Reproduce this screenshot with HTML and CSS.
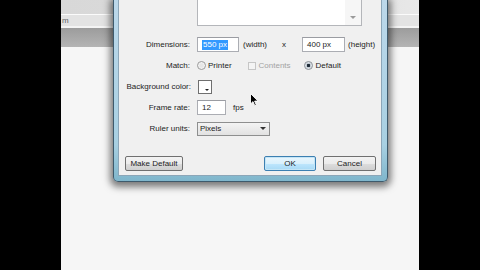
FILE: index.html
```html
<!DOCTYPE html>
<html>
<head>
<meta charset="utf-8">
<title>Document Properties</title>
<link rel="stylesheet" href="styles.css">
</head>
<body>
<div class="screen">
  <div class="black"></div>
  <div class="desk">
    <div class="bg-top"></div>
    <div class="bg-line"></div>
    <div class="bg-menu"><span class="menu-text">m</span></div>
    <div class="bg-line2"></div>
    <div class="bg-band"></div>
    <div class="bg-rest"></div>

    <div class="dialog">
      <div class="client">
        <div class="desc">
          <div class="desc-scroll"><span class="tri-down"></span></div>
        </div>
        <div class="rows">
          <div class="row">
            <div class="label">Dimensions:</div>
            <div class="input in-w"><span class="sel">550 px</span></div>
            <span class="txt ml4">(width)</span>
            <span class="txt ml15">x</span>
            <div class="input in-h ml16"><span class="val">400 px</span></div>
            <span class="txt ml3">(height)</span>
          </div>
          <div class="row">
            <div class="label">Match:</div>
            <span class="radio"></span>
            <span class="txt ml2">Printer</span>
            <span class="check ml16"></span>
            <span class="txt ml3 disabled">Contents</span>
            <span class="radio on ml13"></span>
            <span class="txt ml3">Default</span>
          </div>
          <div class="row">
            <div class="label lbl-wide">Background color:</div>
            <div class="swatch"><span class="sw-tri"></span></div>
          </div>
          <div class="row">
            <div class="label">Frame rate:</div>
            <div class="input in-fr"><span class="val">12</span></div>
            <span class="txt ml7">fps</span>
          </div>
          <div class="row">
            <div class="label">Ruler units:</div>
            <div class="select"><span class="val">Pixels</span><span class="tri-down dark"></span></div>
          </div>
        </div>
        <div class="buttons">
          <div class="btn btn-md">Make Default</div>
          <div class="spacer"></div>
          <div class="btn btn-ok">OK</div>
          <div class="btn btn-cancel">Cancel</div>
        </div>
      </div>
    </div>

    <svg class="cursor" width="9" height="14" viewBox="0 0 9 14">
      <path d="M0.5 0.5 L0.5 11 L3 8.6 L4.8 12.8 L6.3 12.1 L4.6 8.1 L8 8.1 Z" fill="#000" stroke="#fff" stroke-width="0.9"/>
    </svg>
  </div>
  <div class="black"></div>
</div>
</body>
</html>
```

FILE: styles.css
```css
html, body {
  margin: 0;
  padding: 0;
  background: #000;
}

.screen {
  display: flex;
  width: 480px;
  height: 270px;
  background: #000;
  font-family: "Liberation Sans", Arial, sans-serif;
  font-size: 8px;
  color: #1c1c1c;
}

.black {
  width: 61px;
  flex: none;
  background: #000;
}

.desk {
  position: relative;
  width: 358px;
  height: 270px;
  flex: none;
  overflow: hidden;
  display: flex;
  flex-direction: column;
  background: #f5f5f5;
}

.bg-top {
  height: 14px;
  background: linear-gradient(90deg, #d8d8d8, #dcdcdc 60%, #e8e8e8);
}

.bg-line {
  height: 1px;
  background: #fbfbfb;
}

.bg-menu {
  height: 11px;
  background: #e3e3e3;
  display: flex;
  align-items: center;
}

.menu-text {
  padding-left: 1px;
  color: #666;
  line-height: 11px;
}

.bg-line2 {
  height: 2px;
  background: #f4f4f4;
}

.bg-band {
  height: 19px;
  background: linear-gradient(#9c9c9c, #b4b4b4);
}

.bg-rest {
  flex: 1;
  background: #f6f6f6;
}

/* dialog window */
.dialog {
  position: absolute;
  left: 52px;
  top: 0;
  width: 275px;
  height: 182px;
  box-sizing: border-box;
  border: 1px solid #3e5a6c;
  border-top: 0;
  border-radius: 0 0 5px 5px;
  padding: 0 5px 5px 4px;
  background: linear-gradient(#bcd8ea, #a8d0e2 80%, #7fb6cc);
  box-shadow: 0 2px 7px 3px rgba(0, 0, 0, 0.5);
}

.client {
  height: 176px;
  box-sizing: border-box;
  background: #f0f0f0;
  border-left: 1px solid #8ca6b8;
  border-right: 1px solid #8ca6b8;
  border-bottom: 1px solid #8ca6b8;
  display: flex;
  flex-direction: column;
}

.desc {
  margin-left: 78px;
  width: 165px;
  height: 26px;
  box-sizing: border-box;
  background: #fff;
  border: 1px solid #b4b6ba;
  border-top: 0;
  display: flex;
  justify-content: flex-end;
}

.desc-scroll {
  width: 16px;
  background: #f6f6f6;
  display: flex;
  align-items: flex-end;
  justify-content: center;
  padding-bottom: 6px;
  box-sizing: border-box;
}

.tri-down {
  width: 0;
  height: 0;
  border-left: 3px solid transparent;
  border-right: 3px solid transparent;
  border-top: 3px solid #9a9a9a;
}

.tri-down.dark {
  border-top-color: #333;
}

.rows {
  margin-top: 11px;
  display: flex;
  flex-direction: column;
  gap: 6px;
}

.row {
  height: 15px;
  display: flex;
  align-items: center;
}

.label {
  width: 71px;
  flex: none;
  text-align: right;
  white-space: nowrap;
  margin-right: 7px;
}

.lbl-wide {
  width: 72px;
  margin-right: 7px;
}

.txt {
  white-space: nowrap;
}

.disabled {
  color: #a3a3a3;
}

.ml2 { margin-left: 2px; }
.ml3 { margin-left: 3px; }
.ml4 { margin-left: 4px; }
.ml7 { margin-left: 7px; }
.ml13 { margin-left: 13px; }
.ml15 { margin-left: 15px; }
.ml16 { margin-left: 16px; }

.input {
  height: 15px;
  box-sizing: border-box;
  background: #fff;
  border: 1px solid #abadb3;
  border-top-color: #9a9ca2;
  display: flex;
  align-items: center;
}

.in-w { width: 42px; padding-left: 4px; }
.in-h { width: 43px; padding-left: 4px; }
.in-fr { width: 29px; padding-left: 4px; }

.sel {
  background: #3399ff;
  color: #fff;
  line-height: 10px;
  padding: 0 1px;
}

.radio {
  width: 9px;
  height: 9px;
  flex: none;
  box-sizing: border-box;
  border-radius: 50%;
  border: 1px solid #9a9a9a;
  background: radial-gradient(circle, #e6e6e6 30%, #f8f8f8 80%);
}

.radio.on {
  border-color: #8a8f96;
  background: radial-gradient(circle, #1e2a36 0 28%, #b9c3cc 35%, #f4f6f8 80%);
}

.check {
  width: 8px;
  height: 8px;
  flex: none;
  box-sizing: border-box;
  border: 1px solid #c6c6c6;
  background: #f4f4f4;
}

.swatch {
  width: 14px;
  height: 14px;
  box-sizing: border-box;
  border: 1px solid #6f6f6f;
  background: #fff;
  display: flex;
  align-items: flex-end;
  justify-content: flex-end;
  padding: 0 2px 2px 0;
}

.sw-tri {
  width: 0;
  height: 0;
  border-left: 2px solid transparent;
  border-right: 2px solid transparent;
  border-top: 2px solid #222;
}

.select {
  width: 73px;
  height: 14px;
  box-sizing: border-box;
  border: 1px solid #8e8f8f;
  background: linear-gradient(#f4f4f4, #e2e2e2);
  display: flex;
  align-items: center;
  justify-content: space-between;
  padding: 0 3px 0 2px;
}

.buttons {
  margin-top: 20px;
  display: flex;
  padding: 0 5px 0 6px;
}

.spacer {
  flex: 1;
}

.btn {
  height: 15px;
  box-sizing: border-box;
  border: 1px solid #707070;
  border-radius: 2px;
  background: linear-gradient(#f3f3f3, #ebebeb 50%, #dddddd 51%, #cfcfcf);
  display: flex;
  align-items: center;
  justify-content: center;
  white-space: nowrap;
}

.btn-md { width: 58px; }

.btn-ok {
  width: 52px;
  margin-right: 7px;
  border-color: #3c7fb1;
  background: linear-gradient(#eaf6fd, #d9f0fc 50%, #bee6fd 51%, #a7d9f5);
  box-shadow: inset 0 0 0 1px #c4e5f6;
}

.btn-cancel { width: 53px; }

.cursor {
  position: absolute;
  left: 189px;
  top: 93px;
}
```
